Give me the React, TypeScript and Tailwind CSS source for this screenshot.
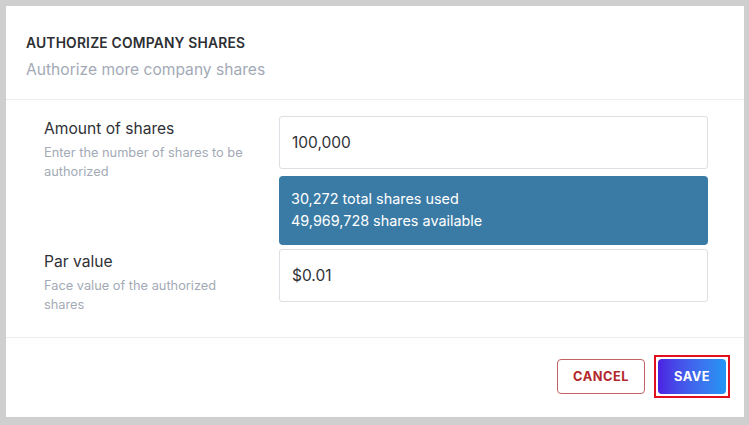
import React from "react";

type Props = {};

function Field({ label, hint, value, children }: { label: string; hint: string; value: string; children?: React.ReactNode }) {
  return (
    <div className="flex">
      <div className="w-[273px] shrink-0 pl-[38px] pt-[2px] pr-[25px]">
        <div className="text-[15.6px] leading-[22px] text-[#2f3136]">{label}</div>
        <div className="mt-[3px] text-[12.8px] leading-[19px] text-[#a3aab6]">{hint}</div>
      </div>
      <div className="w-[429px]">
        <div className="h-[53px] flex items-center px-[12px] border border-[#dcdfe3] rounded-[3px] text-[15.5px] text-[#2f3136]">
          {value}
        </div>
        {children}
      </div>
    </div>
  );
}

function App({}: Props) {
  return (
    <div className="w-[749px] h-[425px] bg-[#cfcfcf] pt-[6px] pl-[6px]" style={{ fontFamily: "Inter, 'Noto Sans', sans-serif" }}>
      <div className="w-[738px] h-[411px] bg-white flex flex-col">
        <div className="h-[94px] px-[20px] pt-[28px] border-b border-[#ececec]">
          <h2 className="text-[13.8px] leading-[18px] font-semibold tracking-[0.2px] text-[#2d2f33]">AUTHORIZE COMPANY SHARES</h2>
          <p className="mt-[8px] text-[15.6px] leading-[20px] text-[#a3aab6]">Authorize more company shares</p>
        </div>

        <div className="h-[238px] pt-[16px] border-b border-[#ececec] flex flex-col gap-[4px]">
          <Field label="Amount of shares" hint="Enter the number of shares to be authorized" value="100,000">
            <div className="mt-[7px] h-[69px] rounded-[4px] bg-[#3a7ba6] px-[12px] pt-[12px] text-[14.4px] leading-[22px] text-white">
              <div>30,272 total shares used</div>
              <div>49,969,728 shares available</div>
            </div>
          </Field>
          <Field label="Par value" hint="Face value of the authorized shares" value="$0.01" />
        </div>

        <div className="flex-1 flex justify-end items-start pt-[21px] pr-[14px] gap-[9px]">
          <button className="h-[35px] w-[88px] rounded-[4px] border border-[#c26466] text-[12.8px] font-bold tracking-[0.5px] text-[#b3282d]">
            CANCEL
          </button>
          <div className="p-[2px] border-2 border-[#e0101f] -mt-[4px]">
            <button className="h-[35px] w-[68px] rounded-[4px] bg-gradient-to-r from-[#4b1ee2] to-[#2296f5] text-[12.8px] font-bold tracking-[0.5px] text-white">
              SAVE
            </button>
          </div>
        </div>
      </div>
    </div>
  );
}

export default App;
